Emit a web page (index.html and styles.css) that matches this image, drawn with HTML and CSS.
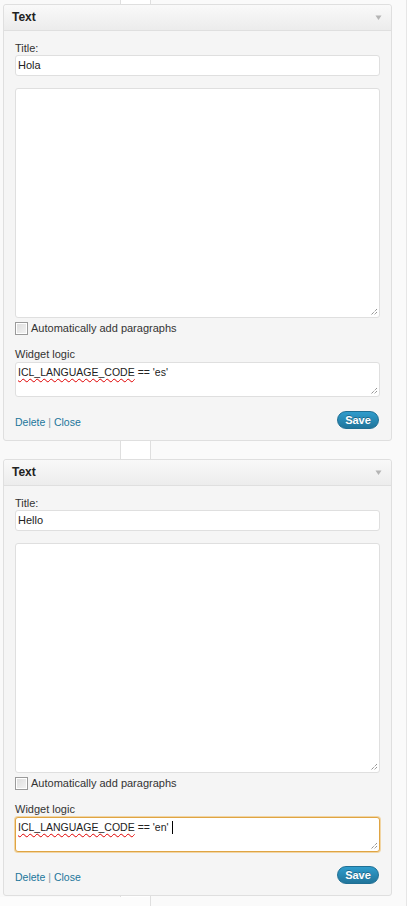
FILE: index.html
```html
<!DOCTYPE html>
<html>
<head>
<meta charset="utf-8">
<link rel="stylesheet" href="styles.css">
</head>
<body>
<div class="sidebar">
  <div class="widget">
    <div class="widget-top">
      <span class="widget-title">Text</span>
      <svg class="arrow" width="7" height="7" viewBox="0 0 7 7"><path d="M0.5 1.5 H6.5 L3.5 6 Z" fill="#b4b4b4"/></svg>
    </div>
    <div class="widget-inside">
      <div class="label">Title:</div>
      <div class="input">Hola</div>
      <div class="textarea big"><svg class="grip" width="8" height="8" viewBox="0 0 8 8"><path d="M7 1 L1 7 M7 4 L4 7" stroke="#666" stroke-width="1" stroke-dasharray="1 1" fill="none"/></svg></div>
      <div class="check-row"><span class="checkbox"></span><span>Automatically add paragraphs</span></div>
      <div class="label logic-label">Widget logic</div>
      <div class="textarea logic"><span class="typo">ICL_LANGUAGE_CODE</span> == 'es'<svg class="grip" width="8" height="8" viewBox="0 0 8 8"><path d="M7 1 L1 7 M7 4 L4 7" stroke="#666" stroke-width="1" stroke-dasharray="1 1" fill="none"/></svg></div>
      <div class="widget-footer">
        <div class="links"><a class="link">Delete</a> <span class="sep">|</span> <a class="link">Close</a></div>
        <span class="button">Save</span>
      </div>
    </div>
  </div>

  <div class="widget">
    <div class="widget-top">
      <span class="widget-title">Text</span>
      <svg class="arrow" width="7" height="7" viewBox="0 0 7 7"><path d="M0.5 1.5 H6.5 L3.5 6 Z" fill="#b4b4b4"/></svg>
    </div>
    <div class="widget-inside">
      <div class="label">Title:</div>
      <div class="input">Hello</div>
      <div class="textarea big"><svg class="grip" width="8" height="8" viewBox="0 0 8 8"><path d="M7 1 L1 7 M7 4 L4 7" stroke="#666" stroke-width="1" stroke-dasharray="1 1" fill="none"/></svg></div>
      <div class="check-row"><span class="checkbox"></span><span>Automatically add paragraphs</span></div>
      <div class="label logic-label">Widget logic</div>
      <div class="textarea logic focused"><span class="typo">ICL_LANGUAGE_CODE</span> == 'en' <span class="caret"></span><svg class="grip" width="8" height="8" viewBox="0 0 8 8"><path d="M7 1 L1 7 M7 4 L4 7" stroke="#666" stroke-width="1" stroke-dasharray="1 1" fill="none"/></svg></div>
      <div class="widget-footer">
        <div class="links"><a class="link">Delete</a> <span class="sep">|</span> <a class="link">Close</a></div>
        <span class="button">Save</span>
      </div>
    </div>
  </div>
</div>
</body>
</html>
```
FILE: styles.css
```css
html, body {
  margin: 0;
  padding: 0;
}
body {
  min-height: 906px;
  font-family: "Liberation Sans", Arial, sans-serif;
  font-size: 11px;
  color: #333;
  background:
    linear-gradient(#fcfcfc, #fcfcfc) 0 897px / 150px 20px no-repeat,
    linear-gradient(to right,
    #f9f9f9 0, #f9f9f9 120px,
    #dfdfdf 120px, #dfdfdf 121px,
    #ffffff 121px, #ffffff 150px,
    #dfdfdf 150px, #dfdfdf 151px,
    #fafafa 151px, #fafafa 406px,
    #e6e6e6 406px, #e6e6e6 407px,
    #ffffff 407px);
}
.sidebar {
  padding: 4px 0 0 3px;
  display: flex;
  flex-direction: column;
  gap: 18px;
}
.widget {
  width: 389px;
  box-sizing: border-box;
  border: 1px solid #dfdfdf;
  border-radius: 3px;
  background: #f5f5f5;
  box-shadow: 0 1px 0 rgba(255,255,255,0.8) inset;
}
.widget-top {
  height: 25px;
  border-bottom: 1px solid #dfdfdf;
  background: linear-gradient(to bottom, #f9f9f9, #ececec);
  border-radius: 3px 3px 0 0;
  display: flex;
  align-items: center;
  justify-content: space-between;
  padding: 0 9px 0 8px;
}
.widget-title {
  font-weight: bold;
  font-size: 12px;
  line-height: 25px;
  color: #222;
}
.arrow {
  display: block;
  margin-top: -1px;
}
.widget-inside {
  padding: 11px;
  display: flex;
  flex-direction: column;
}
.label {
  line-height: 13px;
  height: 13px;
  color: #333;
}
.input {
  margin-top: 0;
  height: 21px;
  box-sizing: border-box;
  border: 1px solid #dfdfdf;
  border-radius: 3px;
  background: #fff;
  padding: 0 3px 0 2px;
  line-height: 19px;
  font-size: 11px;
  color: #222;
}
.textarea {
  position: relative;
  box-sizing: border-box;
  border: 1px solid #dfdfdf;
  border-radius: 3px;
  background: #fff;
}
.textarea.big {
  margin-top: 12px;
  height: 230px;
}
.grip {
  position: absolute;
  right: 1px;
  bottom: 1px;
}
.check-row {
  margin-top: 4px;
  display: flex;
  align-items: center;
  gap: 3px;
  height: 13px;
  line-height: 13px;
  font-size: 11px;
}
.checkbox {
  width: 13px;
  height: 13px;
  box-sizing: border-box;
  border: 1px solid #9a9a9a;
  background: linear-gradient(to bottom right, #dcdcdc, #f4f4f4);
  box-shadow: inset 0 0 0 1px #fff;
}
.logic-label {
  margin-top: 13px;
  height: 14px;
  line-height: 13px;
}
.textarea.logic {
  height: 35px;
  padding: 3px 3px 0 2px;
  line-height: 13px;
  font-size: 10.5px;
  color: #222;
}
.textarea.focused {
  border-color: #dfa443;
  box-shadow: 0 0 0 1px rgba(236, 186, 96, 0.55);
}
.typo {
  text-decoration: underline wavy #e00000;
  text-decoration-thickness: 1px;
  text-underline-offset: 2px;
}
.caret {
  display: inline-block;
  width: 1px;
  height: 13px;
  background: #000;
  vertical-align: -3px;
  margin-left: 1px;
}
.widget-footer {
  margin-top: 14px;
  display: flex;
  justify-content: space-between;
  align-items: flex-end;
  height: 18px;
}
.links {
  line-height: 13px;
  font-size: 10.5px;
}
.link {
  color: #21759b;
  text-decoration: none;
}
.sep {
  color: #8a9aa8;
}
.button {
  height: 18px;
  width: 42px;
  box-sizing: border-box;
  border-radius: 9px;
  border: 1px solid #1f6f94;
  background: linear-gradient(to bottom, #2f9ccc, #21759b);
  color: #fff;
  font-weight: bold;
  font-size: 11px;
  line-height: 16px;
  text-align: center;
  text-shadow: 0 -1px 0 rgba(0,0,0,0.3);
  margin-right: 1px;
}
```
